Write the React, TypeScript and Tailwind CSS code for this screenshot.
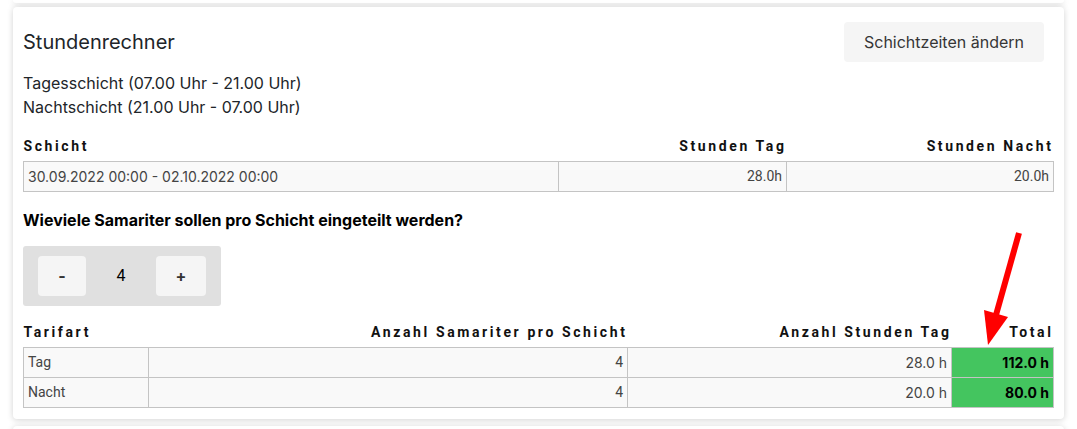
import {useState} from 'react'

const rows = [
  {tarif: 'Tag', hours: 28},
  {tarif: 'Nacht', hours: 20},
]

const thClass =
  'font-["Roboto",sans-serif] font-bold text-[14px] tracking-[2.6px] text-[#111] pb-[4px] pt-[12px] align-bottom'
const tdClass = 'border border-[#c4c4c4] px-[4px] h-[30px] text-[14px] text-[#444]'

const Arrow = () => (
  <svg
    className="absolute left-[962px] top-[218px]"
    width="55"
    height="125"
    viewBox="0 0 55 125"
  >
    <line x1="44" y1="8" x2="21" y2="90" stroke="#f00" strokeWidth="6" />
    <polygon points="9,85 33,92 13,120" fill="#f00" />
  </svg>
)

const App = () => {
  const [count, setCount] = useState(4)

  return (
    <div className='min-h-screen bg-white font-["Inter",sans-serif] text-[#212529]'>
      <div className="mx-[13px] h-[3px] rounded-b bg-white shadow-[0_1px_6px_rgba(0,0,0,0.18)]" />
      <div className="relative mx-[13px] mt-[4px] rounded bg-white px-[10px] pt-[15px] pb-[11px] shadow-[0_1px_6px_rgba(0,0,0,0.18)]">
        <div className="flex items-center justify-between">
          <h2 className="text-[20px] leading-[40px]">Stundenrechner</h2>
          <button className="mr-[10px] h-[40px] w-[200px] rounded bg-[#f5f5f5] text-[16px] text-[#363636]">
            Schichtzeiten ändern
          </button>
        </div>

        <div className="mt-[9px] text-[16px] leading-[24px]">
          <p>Tagesschicht (07.00 Uhr - 21.00 Uhr)</p>
          <p>Nachtschicht (21.00 Uhr - 07.00 Uhr)</p>
        </div>

        <table className="mt-[5px] w-full border-collapse">
          <thead>
            <tr>
              <th className={`${thClass} text-left w-[535px]`}>Schicht</th>
              <th className={`${thClass} text-right w-[228px]`}>Stunden Tag</th>
              <th className={`${thClass} text-right`}>Stunden Nacht</th>
            </tr>
          </thead>
          <tbody>
            <tr className="bg-[#f9f9f9]">
              <td className={tdClass}>30.09.2022 00:00 - 02.10.2022 00:00</td>
              <td className={`${tdClass} text-right font-["Roboto",sans-serif]`}>28.0h</td>
              <td className={`${tdClass} text-right font-["Roboto",sans-serif]`}>20.0h</td>
            </tr>
          </tbody>
        </table>

        <p className="mt-[16px] text-[16px] font-bold leading-[24px] text-black">
          Wieviele Samariter sollen pro Schicht eingeteilt werden?
        </p>

        <div className="mt-[14px] flex h-[60px] w-[198px] items-center rounded-[3px] bg-[#e0e0e0] pl-[15px]">
          <button
            onClick={() => setCount(c => Math.max(0, c - 1))}
            className="h-[40px] w-[48px] rounded bg-[#f5f5f5] text-[16px] font-bold text-[#333]"
          >
            -
          </button>
          <span className='w-[70px] text-center font-["Roboto",sans-serif] text-[16px] text-black'>
            {count}
          </span>
          <button
            onClick={() => setCount(c => c + 1)}
            className="h-[40px] w-[50px] rounded bg-[#f5f5f5] text-[16px] font-bold text-[#333]"
          >
            +
          </button>
        </div>

        <table className="mt-[4px] w-full border-collapse">
          <thead>
            <tr>
              <th className={`${thClass} text-left w-[125px]`}>Tarifart</th>
              <th className={`${thClass} text-right w-[479px]`}>Anzahl Samariter pro Schicht</th>
              <th className={`${thClass} text-right w-[324px]`}>Anzahl Stunden Tag</th>
              <th className={`${thClass} text-right`}>Total</th>
            </tr>
          </thead>
          <tbody>
            {rows.map(row => (
              <tr key={row.tarif} className="bg-[#f9f9f9]">
                <td className={`${tdClass} font-["Roboto",sans-serif]`}>{row.tarif}</td>
                <td className={`${tdClass} text-right font-["Roboto",sans-serif]`}>{count}</td>
                <td className={`${tdClass} text-right`}>{row.hours.toFixed(1)} h</td>
                <td className={`${tdClass} bg-[#44c55f] text-right font-bold text-black`}>
                  {(row.hours * count).toFixed(1)} h
                </td>
              </tr>
            ))}
          </tbody>
        </table>

        <Arrow />
      </div>
      <div className="mx-[13px] mt-[7px] h-[10px] rounded-t bg-white shadow-[0_1px_6px_rgba(0,0,0,0.18)]" />
    </div>
  )
}

export default App
